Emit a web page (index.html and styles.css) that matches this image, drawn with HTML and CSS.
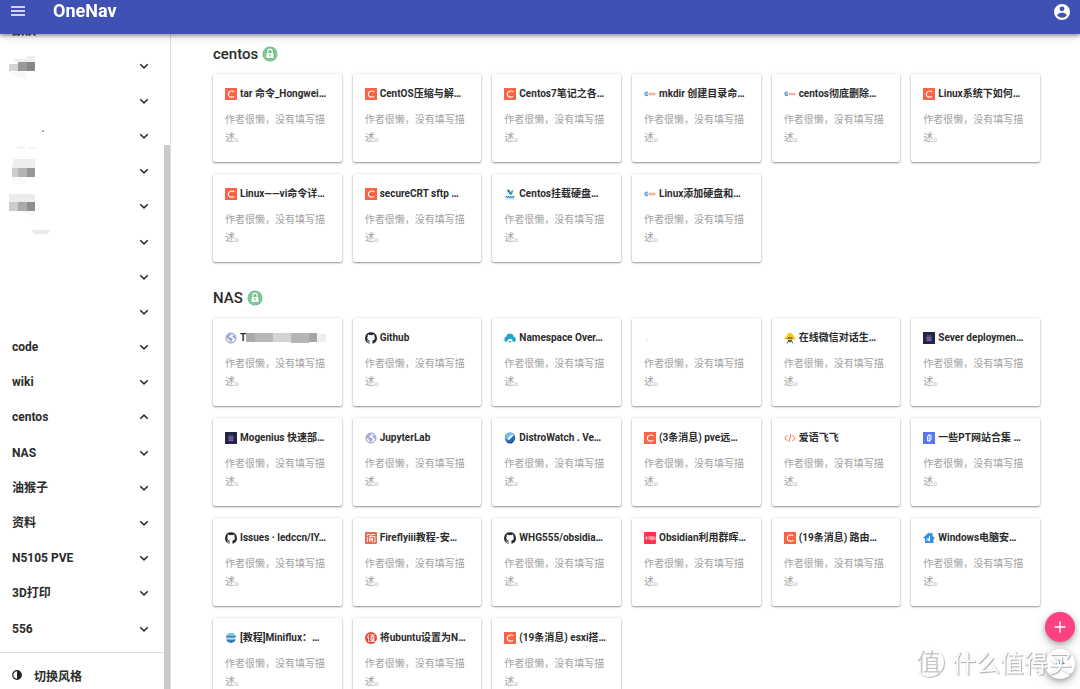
FILE: index.html
```html
<!DOCTYPE html>
<html lang="zh-CN">
<head>
<meta charset="utf-8">
<meta name="viewport" content="width=device-width, initial-scale=1">
<title>OneNav</title>
<link rel="stylesheet" href="styles.css">
</head>
<body>
<svg class="sprite" aria-hidden="true">
  <symbol id="down" viewBox="0 0 24 24"><path d="M4.500 8.500l7.500 7 7.500-7" fill="none" stroke="#333" stroke-width="3.4"/></symbol>
  <symbol id="up" viewBox="0 0 24 24"><path d="M4.500 15.500l7.500-7 7.500 7" fill="none" stroke="#333" stroke-width="3.4"/></symbol>
  <symbol id="lock" viewBox="0 0 16 16"><circle cx="8" cy="8" r="7.5" fill="#69bd84"/><circle cx="8" cy="8" r="6" fill="none" stroke="#a5d8b5" stroke-width=".8"/><path d="M5.800 7.500V5.600a2.200 2.200 0 0 1 4.400 0v1.900" fill="none" stroke="#fff" stroke-width="1.200"/><rect x="4.400" y="7" width="7.200" height="5" rx=".6" fill="#fff"/><path d="M8 8.200v2.400" stroke="#5fba7d" stroke-width="1.200"/></symbol>
  <symbol id="csdn" viewBox="0 0 24 24"><rect width="24" height="24" fill="#fc6344"/><path d="M18.500 7.300C14 4.800 7 5.800 6.600 12.200c-.3 6.200 6.400 7.200 11.600 4.800" fill="none" stroke="#fff" stroke-width="2.400"/></symbol>
  <symbol id="cto" viewBox="0 0 24 24"><path d="M8 9.200a3.600 3.600 0 1 0 0 5M3 12h5" fill="none" stroke="#4b98dc" stroke-width="2.200"/><path d="M10 10h3v4h-3zM14.500 10h2.500v4h-2.500zM18.500 10h4v4h-4z" fill="#f8b7a9" stroke="#f39a87" stroke-width="1"/></symbol>
  <symbol id="linuxcn" viewBox="0 0 24 24"><path d="M5 3l7 11 2-3-3-7z" fill="#2878c8"/><path d="M13 8l6-5-3 10-4 1z" fill="#3aa58c"/><path d="M3 17h18M5 19h15" stroke="#3289cf" stroke-width="2.500" stroke-dasharray="3 1"/><path d="M1 23h22" stroke="#aed6ef"/></symbol>
  <symbol id="globe" viewBox="0 0 24 24"><circle cx="12" cy="12" r="10" fill="#f5f6fc" stroke="#8792cc" stroke-width="2"/><path d="M4 7c4-4 7-4 9-3l-2 3-3 1 1 3 5 1 1 4-4 5-3-6-4-3zM16 5l4 4v5l-3-2-2-3z" fill="#9ca6d8"/></symbol>
  <symbol id="github" viewBox="0 0 24 24"><path fill="#24292e" d="M12 .5A11.800 11.800 0 0 0 8.300 23.500c.6.100.8-.3.8-.6v-2.200c-3.300.700-4-1.400-4-1.400-.5-1.400-1.300-1.800-1.300-1.800-1.100-.7.100-.7.100-.7 1.200.1 1.800 1.200 1.800 1.200 1.100 1.800 2.800 1.300 3.500 1 .1-.8.400-1.300.8-1.600-2.700-.3-5.500-1.300-5.500-5.900 0-1.300.5-2.400 1.200-3.200-.1-.3-.5-1.500.1-3.200 0 0 1-.3 3.300 1.200a11 11 0 0 1 6 0c2.300-1.500 3.300-1.200 3.300-1.200.7 1.700.2 2.900.1 3.200.8.800 1.200 1.900 1.200 3.200 0 4.600-2.800 5.600-5.500 5.900.4.400.8 1.100.8 2.200v3.300c0 .3.200.7.8.6A11.800 11.800 0 0 0 12 .5z"/></symbol>
  <symbol id="cloud" viewBox="0 0 24 24"><path d="M3 20C-1 16 .500 9 5 9 5 4 10 1.500 14 4c3-.5 5 2 5 5 5 0 6 8 2 11l-4-1c1-6-8-8-10-1z" fill="#20a6cb"/><path d="M9 20a3 3 0 0 1 6 0l-3 2z" fill="#55c2df"/></symbol>
  <symbol id="worker" viewBox="0 0 24 24"><path d="M5 9c0-10 14-10 14 0l4 3v3H1v-3z" fill="#f6cd16"/><path d="M7 10h10v5H7z" fill="#9a771c"/><path d="M7 15h10l-2 5H9z" fill="#f4e2b4"/><path d="M6 23l3-5 3 2 3-2 3 5M8 17h8" fill="none" stroke="#555" stroke-width="2"/></symbol>
  <symbol id="mogenius" viewBox="0 0 24 24"><rect width="24" height="24" fill="#202744"/><path d="M7 8h10M7 11h10" stroke="#8187a5" stroke-width="1.500"/><rect x="7" y="12" width="10" height="5" fill="#7945a8"/><path d="M7 17h10" stroke="#b65dbd" stroke-width="1.500"/></symbol>
  <symbol id="distro" viewBox="0 0 24 24"><circle cx="12" cy="11.500" r="10.500" fill="#286aac"/><path d="M2 9c3-9 16-11 20-2-7-1-10 5-19 8z" fill="#78b9e5"/><path d="M6 17l3-6 8-6 2 2-8 8z" fill="#fff"/><path d="M4 19c5 3 12 2 17-3-4 9-12 9-17 3z" fill="#173f79"/></symbol>
  <symbol id="code" viewBox="0 0 24 24"><path d="M7 6l-5 6 5 6M17 6l5 6-5 6M14 4l-4 16" fill="none" stroke="#fa7352" stroke-width="2"/></symbol>
  <symbol id="pt" viewBox="0 0 24 24"><rect width="24" height="24" fill="#5877ee"/><path d="M9 8l7-2v10l-7 2zM12 4v5M13 14v6M9 13l7-2" fill="none" stroke="#fff" stroke-width="1.800"/></symbol>
  <symbol id="jian" viewBox="0 0 24 24"><rect width="24" height="24" rx="2" fill="#e66c58"/><path d="M6 4L4 8M6 5h5M14 4l-2 4M14 5h6M5 10v10M8 9h12v11h-3M9 12h6v6H9zM9 15h6" fill="none" stroke="#fff" stroke-width="1.600"/></symbol>
  <symbol id="red" viewBox="0 0 24 24"><rect width="24" height="24" rx="2" fill="#ff304f"/><path d="M5 8v8M2.500 10v4M7.500 10v4M10 9v7M10 9h3M10 12h3M13 9v7M15 9h3v7h-3zM15 12h3M20 9v7M22 9v7M20 12h2" fill="none" stroke="#fff" stroke-width="1"/></symbol>
  <symbol id="house" viewBox="0 0 24 24"><path d="M0 12L11 1l3 3V2h5v6l5 4-3 2v8H4v-9z" fill="#2d91e8"/><path d="M14 7v9a3.500 3 0 1 1-2-3V9" fill="#fff"/><circle cx="9.500" cy="16.500" r="1.400" fill="#2d91e8"/></symbol>
  <symbol id="miniflux" viewBox="0 0 24 24"><circle cx="12" cy="12" r="10" fill="#3679b9"/><path d="M3 8c4-8 14-8 18 0z" fill="#7cc8e6"/><path d="M2 11h20v4H2z" fill="#d9edf8"/><path d="M5 11v3M9 11v3M12 11h3M17 11v3" stroke="#487fac"/></symbol>
  <symbol id="zhi" viewBox="0 0 24 24"><circle cx="12" cy="12" r="12" fill="#e8473f"/><path d="M8 4L4 12M7 9v11M10 6h10M15 4v5M12 9h6v8h-6zM12 12h6M12 14.500h6M9 19h12" fill="none" stroke="#fff" stroke-width="1.500"/></symbol>
</svg>

<header class="topbar">
  <button class="icon-button" aria-label="菜单"><svg class="menu-icon" viewBox="0 0 14 10"><path d="M0 1h14M0 5h14M0 9h14" stroke="#fff" stroke-width="1.500"/></svg></button>
  <a class="brand" href="#">OneNav</a>
  <button class="icon-button account" aria-label="账户"><svg class="account-icon" viewBox="2 2 20 20"><path fill="#fff" d="M12 2a10 10 0 1 0 0 20 10 10 0 0 0 0-20zm0 3a3 3 0 1 1 0 6 3 3 0 0 1 0-6zm0 14.200a7.200 7.200 0 0 1-6-3.220c.03-1.990 4-3.080 6-3.080s5.970 1.090 6 3.080a7.200 7.200 0 0 1-6 3.220z"/></svg></button>
</header>

<div class="shell">
  <aside class="sidebar">
    <nav class="menu">
      <button class="menu-item"><span>默认</span></button>
      <button class="menu-item" aria-label="分类"><svg class="mosaic" viewBox="0 0 40 26"><path d="M5 6h13V3h8v6H5z" fill="#eee"/><path d="M0 11h9v7H0z" fill="#d5d5d5"/><path d="M9 9h9v9H9z" fill="#999"/><path d="M18 9h8v9h-8z" fill="#888"/><path d="M0 19h17v7L5 22z" fill="#f7f7f7"/></svg><svg class="chevron"><use href="#down"/></svg></button>
      <button class="menu-item" aria-label="分类"><svg class="chevron"><use href="#down"/></svg></button>
      <button class="menu-item" aria-label="分类"><svg class="mosaic" viewBox="0 0 40 26"><path d="M33 7h2v2h-2z" fill="#aaa"/><path d="M8 23h8v3H8zM19 24h9v2h-9z" fill="#f4f4f4"/></svg><svg class="chevron"><use href="#down"/></svg></button>
      <button class="menu-item" aria-label="分类"><svg class="mosaic" viewBox="0 0 40 26"><path d="M5 1h21v9H3z" fill="#eee"/><path d="M3 10h6v9H3z" fill="#ccc"/><path d="M9 10h9v9H9z" fill="#b4b4b4"/><path d="M18 10h8v9h-8z" fill="#969696"/><path d="M3 19h14v7H3z" fill="#f9f9f9"/></svg><svg class="chevron"><use href="#down"/></svg></button>
      <button class="menu-item" aria-label="分类"><svg class="mosaic" viewBox="0 0 40 26"><path d="M0 1h26v8H0z" fill="#ececec"/><path d="M0 9h9v9H0z" fill="#ccc"/><path d="M9 9h9v9H9z" fill="#aaa"/><path d="M18 9h8v9h-8z" fill="#8e8e8e"/><path d="M9 18h17v7z" fill="#f8f8f8"/></svg><svg class="chevron"><use href="#down"/></svg></button>
      <button class="menu-item" aria-label="分类"><svg class="mosaic" viewBox="0 0 40 26"><path d="M23 1h19l-4 4H25z" fill="#e9e9e9"/></svg><svg class="chevron"><use href="#down"/></svg></button>
      <button class="menu-item" aria-label="分类"><svg class="chevron"><use href="#down"/></svg></button>
      <button class="menu-item" aria-label="分类"><svg class="chevron"><use href="#down"/></svg></button>
      <button class="menu-item"><span>code</span><svg class="chevron"><use href="#down"/></svg></button>
      <button class="menu-item"><span>wiki</span><svg class="chevron"><use href="#down"/></svg></button>
      <button class="menu-item"><span>centos</span><svg class="chevron"><use href="#up"/></svg></button>
      <button class="menu-item"><span>NAS</span><svg class="chevron"><use href="#down"/></svg></button>
      <button class="menu-item"><span>油猴子</span><svg class="chevron"><use href="#down"/></svg></button>
      <button class="menu-item"><span>资料</span><svg class="chevron"><use href="#down"/></svg></button>
      <button class="menu-item"><span>N5105 PVE</span><svg class="chevron"><use href="#down"/></svg></button>
      <button class="menu-item"><span>3D打印</span><svg class="chevron"><use href="#down"/></svg></button>
      <button class="menu-item"><span>556</span><svg class="chevron"><use href="#down"/></svg></button>
    </nav>
    <button class="theme"><svg class="theme-icon" viewBox="0 0 10 10"><circle cx="5" cy="5" r="4.300" fill="none" stroke="#222" stroke-width="1.200"/><path d="M5 .7a4.300 4.300 0 0 1 0 8.600z" fill="#222"/></svg>切换风格</button>
    <div class="thumb"></div>
  </aside>

  <main class="content">
    <section class="group">
      <h2 class="group-title">centos <svg class="lock"><use href="#lock"/></svg></h2>
      <div class="cards">
        <a class="card" href="#"><h3 class="title"><svg class="favicon"><use href="#csdn"/></svg><span>tar 命令_Hongwei…</span></h3><p class="desc">作者很懒，没有填写描述。</p></a>
        <a class="card" href="#"><h3 class="title"><svg class="favicon"><use href="#csdn"/></svg><span>CentOS压缩与解…</span></h3><p class="desc">作者很懒，没有填写描述。</p></a>
        <a class="card" href="#"><h3 class="title"><svg class="favicon"><use href="#csdn"/></svg><span>Centos7笔记之各…</span></h3><p class="desc">作者很懒，没有填写描述。</p></a>
        <a class="card" href="#"><h3 class="title"><svg class="favicon"><use href="#cto"/></svg><span>mkdir 创建目录命…</span></h3><p class="desc">作者很懒，没有填写描述。</p></a>
        <a class="card" href="#"><h3 class="title"><svg class="favicon"><use href="#cto"/></svg><span>centos彻底删除…</span></h3><p class="desc">作者很懒，没有填写描述。</p></a>
        <a class="card" href="#"><h3 class="title"><svg class="favicon"><use href="#csdn"/></svg><span>Linux系统下如何…</span></h3><p class="desc">作者很懒，没有填写描述。</p></a>
        <a class="card" href="#"><h3 class="title"><svg class="favicon"><use href="#csdn"/></svg><span>Linux——vi命令详…</span></h3><p class="desc">作者很懒，没有填写描述。</p></a>
        <a class="card" href="#"><h3 class="title"><svg class="favicon"><use href="#csdn"/></svg><span>secureCRT sftp …</span></h3><p class="desc">作者很懒，没有填写描述。</p></a>
        <a class="card" href="#"><h3 class="title"><svg class="favicon"><use href="#linuxcn"/></svg><span>Centos挂载硬盘…</span></h3><p class="desc">作者很懒，没有填写描述。</p></a>
        <a class="card" href="#"><h3 class="title"><svg class="favicon"><use href="#cto"/></svg><span>Linux添加硬盘和…</span></h3><p class="desc">作者很懒，没有填写描述。</p></a>
      </div>
    </section>
    <section class="group">
      <h2 class="group-title">NAS <svg class="lock"><use href="#lock"/></svg></h2>
      <div class="cards">
        <a class="card" href="#"><h3 class="title"><svg class="favicon"><use href="#globe"/></svg><span>T</span><svg class="redacted" viewBox="0 0 80 10"><path d="M0 0h9v9H0z" fill="#aaa"/><path d="M9 0h18v9H9z" fill="#b9b9b9"/><path d="M27 0h18v9H27z" fill="#d3d3d3"/><path d="M45 0h18v10H45z" fill="#b5b5b5"/><path d="M63 0h8v9h-8z" fill="#a5a5a5"/><path d="M71 1h9v8h-9z" fill="#eee"/></svg></h3><p class="desc">作者很懒，没有填写描述。</p></a>
        <a class="card" href="#"><h3 class="title"><svg class="favicon"><use href="#github"/></svg><span>Github</span></h3><p class="desc">作者很懒，没有填写描述。</p></a>
        <a class="card" href="#"><h3 class="title"><svg class="favicon"><use href="#cloud"/></svg><span>Namespace Over…</span></h3><p class="desc">作者很懒，没有填写描述。</p></a>
        <a class="card" href="#"><h3 class="title"><svg class="favicon" viewBox="0 0 12 12"><path d="M3 8h1v1H3z" fill="#f8c8a0"/></svg></h3><p class="desc">作者很懒，没有填写描述。</p></a>
        <a class="card" href="#"><h3 class="title"><svg class="favicon"><use href="#worker"/></svg><span>在线微信对话生…</span></h3><p class="desc">作者很懒，没有填写描述。</p></a>
        <a class="card" href="#"><h3 class="title"><svg class="favicon"><use href="#mogenius"/></svg><span>Sever deploymen…</span></h3><p class="desc">作者很懒，没有填写描述。</p></a>
        <a class="card" href="#"><h3 class="title"><svg class="favicon"><use href="#mogenius"/></svg><span>Mogenius 快速部…</span></h3><p class="desc">作者很懒，没有填写描述。</p></a>
        <a class="card" href="#"><h3 class="title"><svg class="favicon"><use href="#globe"/></svg><span>JupyterLab</span></h3><p class="desc">作者很懒，没有填写描述。</p></a>
        <a class="card" href="#"><h3 class="title"><svg class="favicon"><use href="#distro"/></svg><span>DistroWatch . Ve…</span></h3><p class="desc">作者很懒，没有填写描述。</p></a>
        <a class="card" href="#"><h3 class="title"><svg class="favicon"><use href="#csdn"/></svg><span>(3条消息) pve远…</span></h3><p class="desc">作者很懒，没有填写描述。</p></a>
        <a class="card" href="#"><h3 class="title"><svg class="favicon"><use href="#code"/></svg><span>爱语飞飞</span></h3><p class="desc">作者很懒，没有填写描述。</p></a>
        <a class="card" href="#"><h3 class="title"><svg class="favicon"><use href="#pt"/></svg><span>一些PT网站合集 …</span></h3><p class="desc">作者很懒，没有填写描述。</p></a>
        <a class="card" href="#"><h3 class="title"><svg class="favicon"><use href="#github"/></svg><span>Issues · ledccn/IY…</span></h3><p class="desc">作者很懒，没有填写描述。</p></a>
        <a class="card" href="#"><h3 class="title"><svg class="favicon"><use href="#jian"/></svg><span>Fireflyiii教程-安…</span></h3><p class="desc">作者很懒，没有填写描述。</p></a>
        <a class="card" href="#"><h3 class="title"><svg class="favicon"><use href="#github"/></svg><span>WHG555/obsidia…</span></h3><p class="desc">作者很懒，没有填写描述。</p></a>
        <a class="card" href="#"><h3 class="title"><svg class="favicon"><use href="#red"/></svg><span>Obsidian利用群晖…</span></h3><p class="desc">作者很懒，没有填写描述。</p></a>
        <a class="card" href="#"><h3 class="title"><svg class="favicon"><use href="#csdn"/></svg><span>(19条消息) 路由…</span></h3><p class="desc">作者很懒，没有填写描述。</p></a>
        <a class="card" href="#"><h3 class="title"><svg class="favicon"><use href="#house"/></svg><span>Windows电脑安…</span></h3><p class="desc">作者很懒，没有填写描述。</p></a>
        <a class="card" href="#"><h3 class="title"><svg class="favicon"><use href="#miniflux"/></svg><span>[教程]Miniflux：…</span></h3><p class="desc">作者很懒，没有填写描述。</p></a>
        <a class="card" href="#"><h3 class="title"><svg class="favicon"><use href="#zhi"/></svg><span>将ubuntu设置为N…</span></h3><p class="desc">作者很懒，没有填写描述。</p></a>
        <a class="card" href="#"><h3 class="title"><svg class="favicon"><use href="#csdn"/></svg><span>(19条消息) esxi搭…</span></h3><p class="desc">作者很懒，没有填写描述。</p></a>
      </div>
    </section>
  </main>
</div>

<div class="fabs">
  <button class="fab fab-add" aria-label="添加"><svg class="fab-icon" viewBox="0 0 12 12"><path d="M6 .5v11M.5 6h11" stroke="#fff" stroke-width="1.500"/></svg></button>
  <button class="fab fab-top" aria-label="返回顶部"><svg class="fab-icon" viewBox="0 0 12 12"><path d="M6 1l5 5H5z" fill="#1a8ceb"/><path d="M0 8.500h14" stroke="#4ba8ef"/></svg></button>
</div>
<div class="watermark"><span class="mark">值</span><span>什么值得买</span></div>
</body>
</html>
```
FILE: styles.css
```css
* { box-sizing: border-box; }
body {
  margin: 0;
  overflow: hidden;
  background: #fff;
  color: #2b2b2b;
  font-family: Roboto, "Noto Sans CJK SC", sans-serif;
}
button {
  border: 0;
  padding: 0;
  background: none;
  color: inherit;
  font: inherit;
  cursor: pointer;
}
a { color: inherit; text-decoration: none; }
.sprite { position: absolute; width: 0; height: 0; }

.topbar {
  position: fixed;
  inset: 0 0 auto 0;
  z-index: 2;
  display: flex;
  align-items: flex-start;
  height: 34px;
  padding: 0 10px;
  background: #3f51b5;
  box-shadow: 0 2px 3px rgba(0, 0, 0, .3), 0 3px 8px rgba(0, 0, 0, .15);
}
.icon-button { display: flex; align-items: center; height: 22px; }
.menu-icon { width: 16px; height: 10px; }
.brand {
  margin-left: 27px;
  color: #fff;
  font-size: 18px;
  font-weight: 700;
  line-height: 22px;
}
.account { height: 24px; margin-left: auto; }
.account-icon { width: 16px; height: 16px; }

.shell { display: flex; height: 100vh; }
.sidebar {
  position: relative;
  display: flex;
  flex: 0 0 171px;
  flex-direction: column;
  border-right: 1px solid #dedede;
}
.menu {
  display: flex;
  flex: 1;
  flex-direction: column;
  min-height: 0;
  margin-right: 6px;
  padding: 13px 0 6px;
  border-bottom: 1px solid #e0e0e0;
}
.menu-item {
  display: flex;
  flex: 1;
  align-items: center;
  min-height: 0;
  padding: 0 14px 0 12px;
  font-size: 12px;
  font-weight: 700;
  line-height: 18px;
}
.mosaic { width: 40px; height: 26px; margin-left: -3px; overflow: visible; }
.chevron { width: 12px; height: 12px; margin-left: auto; }
.theme {
  display: flex;
  align-items: center;
  gap: 12px;
  height: 36px;
  padding: 8px 12px 0;
  font-size: 12px;
  font-weight: 700;
}
.theme-icon { width: 10px; height: 10px; }
.thumb {
  position: absolute;
  top: 145px;
  right: 0;
  bottom: 0;
  width: 6px;
  background: #cacaca;
}

.content {
  flex: 1;
  min-width: 0;
  padding: 44px 40px 0 42px;
  overflow-y: auto;
  scrollbar-width: none;
}
.group { margin-bottom: 26px; }
.group-title {
  display: flex;
  align-items: center;
  gap: 4px;
  margin: 0 0 10px;
  font-size: 15px;
  font-weight: 500;
  line-height: 20px;
}
.lock { width: 16px; height: 16px; }
.cards {
  display: grid;
  grid-template-columns: repeat(6, minmax(0, 1fr));
  gap: 12px 11px;
}
.card {
  padding: 14px 12px 15px;
  border-radius: 2px;
  box-shadow: 0 1px 2px rgba(0, 0, 0, .4), 0 0 3px rgba(0, 0, 0, .1);
}
.title {
  display: flex;
  align-items: center;
  gap: 3px;
  height: 12px;
  margin: 0 0 11px;
  font-size: 10px;
  font-weight: 700;
  line-height: 12px;
  white-space: nowrap;
}
.favicon { flex: none; width: 12px; height: 12px; }
.redacted { flex: none; width: 80px; height: 10px; margin-left: -3px; }
.desc {
  margin: 0;
  color: #a2a2a2;
  font-size: 10px;
  line-height: 18px;
}

.fabs {
  position: fixed;
  right: 5px;
  bottom: 10px;
  z-index: 2;
  display: flex;
  flex-direction: column;
  gap: 7px;
}
.fab {
  display: flex;
  align-items: center;
  justify-content: center;
  width: 30px;
  height: 30px;
  border-radius: 50%;
  box-shadow: 0 2px 5px rgba(0, 0, 0, .25), 0 4px 12px rgba(0, 0, 0, .2);
}
.fab-add { background: #ff4081; }
.fab-top { background: #fff; }
.fab-icon { width: 12px; height: 12px; overflow: visible; }

.watermark {
  position: fixed;
  right: 8px;
  bottom: 12px;
  z-index: 3;
  display: flex;
  align-items: center;
  gap: 8px;
  color: #fff;
  font-family: "Noto Sans CJK SC", sans-serif;
  font-size: 24px;
  line-height: 30px;
  text-shadow: 1px 1px 1px #aaa, 0 0 1px #ccc;
  pointer-events: none;
}
.mark {
  width: 30px;
  height: 30px;
  border-radius: 50%;
  box-shadow: 1px 1px 1px #bbb;
  color: #c9c9c9;
  line-height: 28px;
  text-align: center;
  text-shadow: none;
}
```
